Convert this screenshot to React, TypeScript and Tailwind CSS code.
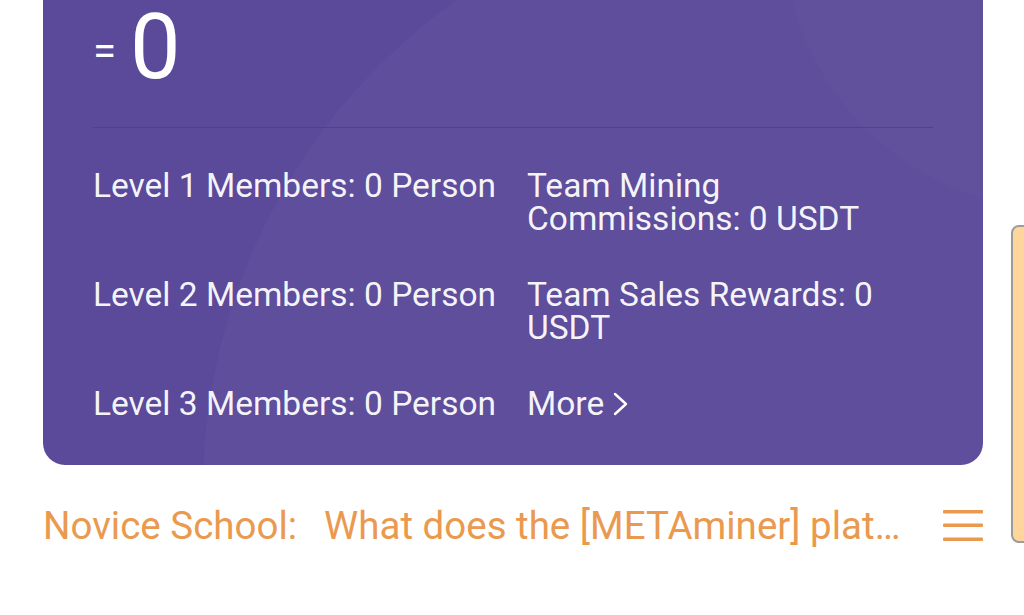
const font = { fontFamily: 'Roboto, "Noto Sans", sans-serif' };

const Stat = ({ children }: { children: React.ReactNode }) => (
  <div className="text-[33.5px] leading-[33px] text-white/95">{children}</div>
);

export default function App() {
  return (
    <div className="relative h-[615px] w-[1024px] overflow-hidden bg-white" style={font}>
      <div className="pl-[43px] pr-[41px]">
        {/* team card */}
        <div className="relative -mt-[30px] overflow-hidden rounded-[22px] bg-[#5b4a9a] px-[50px] pb-[45px] pt-[33px]">
          <div className="pointer-events-none absolute left-[160px] top-[-80px] h-[1200px] w-[1200px] rounded-full bg-white/[0.025]" />
          <div className="pointer-events-none absolute left-[740px] top-[-320px] h-[560px] w-[560px] rounded-full bg-white/[0.02]" />

          <div className="relative">
            <div className="flex h-[90px] items-center gap-[14px] text-white">
              <span className="mt-[6px] text-[42px] leading-none">=</span>
              <span className="text-[90px] leading-none">0</span>
            </div>
            <div className="mt-[34px] h-px bg-[#51418c]" />

            <div className="mt-[41px] grid grid-cols-[434px_380px] gap-y-[43px]">
              <Stat>Level 1 Members: 0 Person</Stat>
              <Stat>Team Mining Commissions: 0 USDT</Stat>
              <Stat>Level 2 Members: 0 Person</Stat>
              <Stat>Team Sales Rewards: 0 USDT</Stat>
              <Stat>Level 3 Members: 0 Person</Stat>
              <Stat>
                <span className="flex items-center gap-[9px]">
                  More
                  <svg width="16" height="24" viewBox="0 0 16 24" fill="none">
                    <polyline points="2,2 13,12 2,22" stroke="white" strokeWidth="2.4" strokeLinejoin="round" strokeLinecap="round" />
                  </svg>
                </span>
              </Stat>
            </div>
          </div>
        </div>

        {/* notice row */}
        <div className="mt-[39px] flex items-center text-[38.5px] leading-[44px] text-[#ea994f]">
          <span className="shrink-0 whitespace-nowrap">Novice School:</span>
          <span className="ml-[27px] min-w-0 flex-1 truncate">
            What does the [METAminer] platform do and how can I start making money?
          </span>
          <svg className="ml-[34px] shrink-0" width="40" height="32" viewBox="0 0 40 32">
            <rect x="0" y="0" width="40" height="3.5" rx="1" fill="#ea994f" />
            <rect x="0" y="13.5" width="40" height="3.5" rx="1" fill="#ea994f" />
            <rect x="0" y="27.5" width="40" height="3.5" rx="1" fill="#ea994f" />
          </svg>
        </div>
      </div>

      {/* floating side tab */}
      <div className="absolute left-[1011px] top-[225px] h-[318px] w-[30px] rounded-[8px] border-2 border-[#9c9c9c] bg-[#fed59a]" />
    </div>
  );
}
